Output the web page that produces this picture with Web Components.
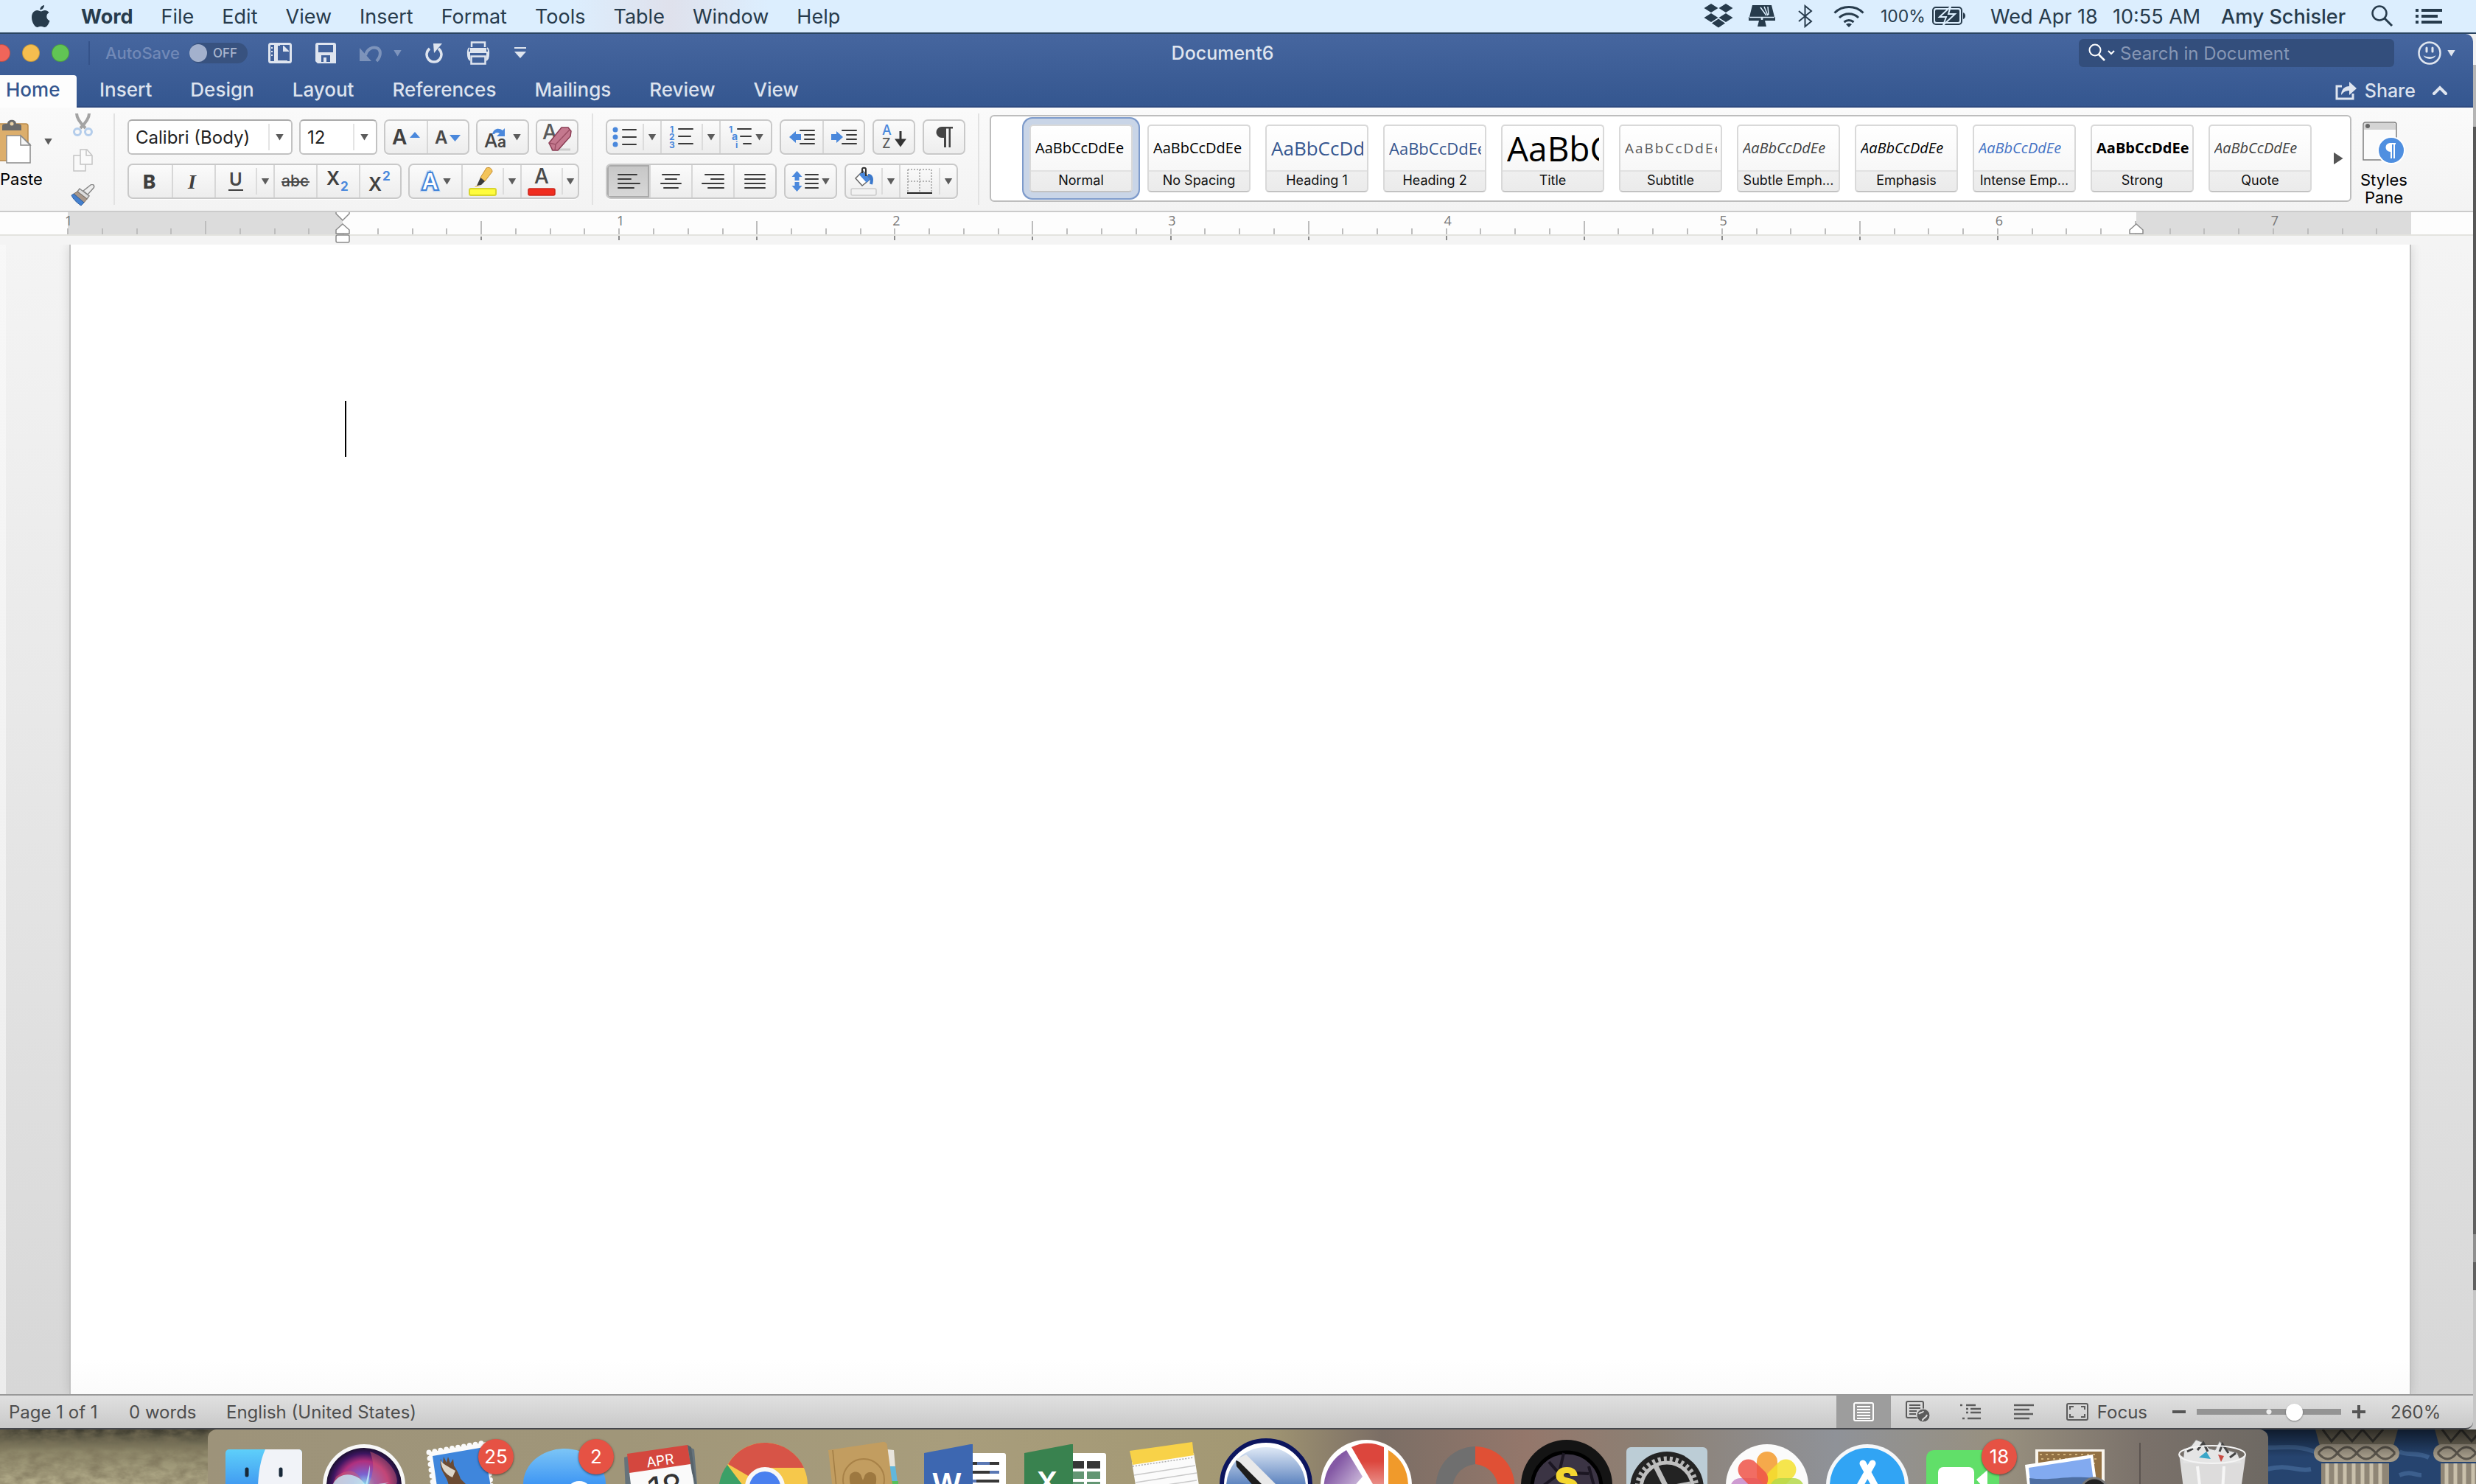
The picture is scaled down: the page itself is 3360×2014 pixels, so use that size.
<!DOCTYPE html>
<html lang="en">
<head>
<meta charset="utf-8">
<title>Document6</title>
<style>
html,body{margin:0;height:100%}
body{font-family:Inter,"Liberation Sans",sans-serif;overflow:hidden;background:#6b6a62}
</style>
</head>
<body>
<desktop-screen></desktop-screen>
<script>
const BASE = `<style>
*{box-sizing:border-box}
button{font:inherit;color:inherit;background:none;border:0;padding:0;margin:0;display:flex;align-items:center;justify-content:center;white-space:nowrap}
a{color:inherit;text-decoration:none;white-space:nowrap}
svg{display:block;flex:none}
nav{display:flex;align-items:center}
.caret{width:11px;height:9px;flex:none;background:#5c5c5c;clip-path:polygon(0 0,100% 0,50% 100%)}
</style>`;

function define(name, markup) {
  customElements.define(name, class extends HTMLElement {
    constructor() {
      super();
      this.attachShadow({ mode: 'open' }).innerHTML = BASE + (typeof markup === 'function' ? markup(this) : markup);
    }
  });
}

const svg = (w, h, body) => `<svg width="${w}" height="${h}" viewBox="0 0 ${w} ${h}" fill="none" aria-hidden="true">${body}</svg>`;
const lines = (rows, color = '#3a3a3a', sw = 2) => rows.map(([a, b, y]) => `<path d="M${a} ${y}H${b}" stroke="${color}" stroke-width="${sw}" stroke-linecap="round"/>`).join('');
const txt = (x, y, size, s, fill, extra = '') => `<text x="${x}" y="${y}" font-size="${size}" fill="${fill}" ${extra}>${s}</text>`;

const ICONS = {
  apple: svg(26, 32, `<path fill="#273b4c" d="M18 1c.3 3-2.600 6.500-5.600 6.400C12 4.500 15 1.200 18 1zM13.400 9.400c1.500 0 3-1.500 5.600-1.500 2 0 4.200 1.100 5.500 3-4.700 2.700-4 9.300 1 11.300C24 26.500 21.500 31 18.500 31c-2 0-2.700-1.200-5-1.200S10.300 31 8.500 31C5 31 1 24 1 17.600c0-6 3.700-9.500 7.300-9.500 2.300 0 3.900 1.300 5.100 1.300z"/>`),
  dropbox: svg(40, 34, `<path fill="#273b4c" d="M10 0l9.500 6L10 12 .500 6zM30 0l9.500 6L30 12l-9.500-6zM10 13l9.500 6-9.500 6-9.500-6zM30 13l9.500 6-9.500 6-9.500-6zM20 20.500l9 6-9 6-9-6z"/>`),
  cleaner: svg(36, 32, `<path fill="#273b4c" d="M5 1h26l5 20H0z"/><path fill="#273b4c" d="M0 17h36v5H22l2 8H12l2-8H0z"/><path d="M16 4l8 11M21 3l5 12M26 3l1 11M1 17.500h34" stroke="#def0ff" stroke-width="1.500"/><circle cx="18" cy="19.500" r="1.500" fill="#def0ff"/>`),
  bluetooth: svg(20, 32, `<path stroke="#273b4c" stroke-width="2" d="M1 9l17 14-8.500 7V2L18 9 1 23"/>`),
  wifi: svg(42, 30, `<g stroke="#273b4c" stroke-width="3"><path d="M1.500 10.500a28 28 0 0 1 39 0M8 17a19 19 0 0 1 26 0M14.500 23a10 10 0 0 1 13 0"/></g><path fill="#273b4c" d="M17 26a6 6 0 0 1 8 0l-4 4z"/>`),
  battery: svg(46, 26, `<rect x="1" y="1" width="39" height="23" rx="4" stroke="#273b4c" stroke-width="2"/><rect x="4" y="4" width="33" height="17" rx="2" fill="#273b4c"/><path d="M42 8c4 1 4 8 0 9z" fill="#273b4c"/><path d="M25 0L10 14h9l-4 11 16-15h-9z" fill="#273b4c" stroke="#def0ff" stroke-width="2"/>`),
  find: svg(30, 30, `<circle cx="11" cy="11" r="9.500" stroke="#273b4c" stroke-width="2.500"/><path d="M18 18l10 10" stroke="#273b4c" stroke-width="3"/>`),
  list: svg(36, 20, `<path d="M0 2h4M8 2h28M0 10h4M8 10h22M0 18h4M8 18h28" stroke="#273b4c" stroke-width="4"/>`),

  sidebar: svg(32, 28, `<rect x="1.500" y="1.500" width="29" height="25" rx="2" stroke="#dfe5ef" stroke-width="3"/><path d="M9 1v26" stroke="#dfe5ef" stroke-width="2"/><path d="M4 7h2M4 12h2M4 17h2" stroke="#dfe5ef" stroke-width="2"/><path d="M10 1h6v3h-3v20h13v2H10z" fill="#dfe5ef"/><path d="M20 4v8h8v-1l-7-7z" fill="#dfe5ef"/>`),
  save: svg(28, 28, `<path fill="#dfe5ef" fill-rule="evenodd" d="M3 0h22a3 3 0 0 1 3 3v25H3l-3-3V3a3 3 0 0 1 3-3zM4 3v10h20V3zM8 17v9h3v-6h4v6h5v-9z"/>`),
  undo: svg(32, 26, `<g opacity=".38"><path fill="#dfe5ef" d="M0 6v18h16z"/><path d="M8 16c2-8 9-12 15-10s7 10 0 18" stroke="#dfe5ef" stroke-width="4"/></g>`),
  redo: svg(24, 28, `<path d="M6 8a10 10 0 1 0 12 0" stroke="#dfe5ef" stroke-width="3.500"/><path fill="#dfe5ef" d="M11 1h12L12 14z"/>`),
  print: svg(32, 32, `<path d="M7 8V1.500h18V8" stroke="#dfe5ef" stroke-width="2.500"/><path fill="#dfe5ef" d="M5 9h22v7H5z"/><path d="M4 9c-3 2-3 13 1 17M28 9c3 2 3 13-1 17" stroke="#dfe5ef" stroke-width="2"/><path fill="#dfe5ef" d="M1 14h4v11l-3-1zM31 14h-4v11l3-1z"/><rect x="6.500" y="20.500" width="19" height="10" stroke="#dfe5ef" stroke-width="2.500"/>`),
  customise: svg(18, 16, `<path d="M1 1h16" stroke="#dfe5ef" stroke-width="2"/><path fill="#dfe5ef" d="M1 6h16l-8 9z"/>`),
  search: svg(38, 26, `<circle cx="10" cy="9" r="7.500" stroke="#fff" stroke-width="2"/><path d="M15 15l8 8" stroke="#fff" stroke-width="2.500"/><path d="M28 10l4 4 4-4" stroke="#fff" stroke-width="2"/>`),
  smile: svg(32, 32, `<circle cx="16" cy="16" r="14.500" stroke="#dfe5ef" stroke-width="2.500"/><path d="M12 9v5M20 9v5" stroke="#dfe5ef" stroke-width="3" stroke-linecap="round"/><path d="M7.500 19c3 6.500 14 6.500 17 0-4 3-13 3-17 0z" fill="#dfe5ef"/>`),
  share: svg(30, 26, `<path d="M9 7H2v17h22v-7" stroke="#dfe5ef" stroke-width="3"/><path d="M8 19c0-8 5-12 11-12V1l10 9-10 9v-6c-5 0-8 2-11 6z" fill="#dfe5ef"/>`),
  chevron: svg(22, 14, `<path d="M3 11l8-8 8 8" stroke="#dfe5ef" stroke-width="4" stroke-linecap="round"/>`),

  clipboard: svg(44, 60, `<rect x="-12" y="6" width="50" height="50" rx="3" fill="#dcae6c" stroke="#b98b4c" stroke-width="1.500"/><path d="M3 15V9c0-3 4-3 7-3 0-7 12-7 12 0 3 0 7 0 7 3v6z" fill="#6a6a6a"/><circle cx="16" cy="6" r="2.500" fill="#e8d0a5"/><path d="M9 22h19l13 12v25H9z" fill="#fff" stroke="#8b8b8b" stroke-width="1.500"/><path d="M28 22v13h13z" fill="#f6f6f6" stroke="#8b8b8b" stroke-width="1.500"/>`),
  cut: svg(28, 32, `<path d="M5 0c0 6 6 14 12 20M22 0c0 6-6 14-12 20" stroke="#a3a3a3" stroke-width="4"/><circle cx="6" cy="25" r="4.500" stroke="#b4cdeb" stroke-width="3"/><circle cx="21" cy="25" r="4.500" stroke="#b4cdeb" stroke-width="3"/>`),
  copy: svg(28, 32, `<path d="M1 9h16v21H1z" fill="#f9f9f9" stroke="#c4c4c4" stroke-width="1.500"/><path d="M10 1h9l7 8v12H10z" fill="#fafafa" stroke="#c4c4c4" stroke-width="1.500"/><path d="M18 1v8h8" stroke="#c4c4c4" stroke-width="1.500"/>`),
  brush: svg(34, 30, `<path d="M17 9L27 1c3-2 6 1 4 4l-8 9z" fill="#eee" stroke="#888" stroke-width="1.500"/><path d="M12 6l13 10-3 4L9 10z" fill="#ddd" stroke="#888" stroke-width="1.500"/><path d="M9 10l13 10-4 5L4 13z" fill="#a8978a" stroke="#7d7064"/><path d="M4 13l14 12-4 4C8 25 3 20 1 15z" fill="#4580cd" stroke="#305e9e"/>`),
  grow: svg(38, 26, txt(0, 23, 28, 'A', '#404040', 'font-weight="600"') + `<path d="M24 14l7-8 7 8z" fill="#4a88dc"/>`),
  shrink: svg(36, 26, txt(0, 22, 24, 'A', '#484848', 'font-weight="600"') + `<path d="M20 10h15l-7.500 9z" fill="#4a88dc"/>`),
  case: svg(36, 32, txt(0, 30, 26, 'A', '#444', 'font-weight="500"') + txt(18, 30, 21, 'a', '#444', 'font-weight="600"') + `<path d="M11 12c2-8 9-9 14-5l3-3v11H17l4-4c-4-2-6-1-7 1z" fill="#4a88dc"/>`),
  erase: svg(44, 42, txt(2, 24, 28, 'A', '#5a5a5a', 'font-weight="500"') + `<path d="M14 38h26" stroke="#ccc" stroke-width="3"/><path d="M11 29L28 8h9l4 5-1 7-17 19h-7z" fill="#c4788e" stroke="#8b3d54" stroke-width="1.500"/><path d="M11 29l9 2 19-20M20 31l-1 8" stroke="#9c5066" stroke-width="1.500"/>`),
  bold: svg(22, 26, txt(1, 23, 26, 'B', '#3f3f3f', 'font-weight="800"')),
  italic: svg(22, 26, txt(3, 23, 28, 'I', '#3f3f3f', 'font-weight="700" font-style="italic" font-family="Liberation Serif"')),
  under: svg(22, 28, txt(2, 20, 24, 'U', '#484848', 'font-weight="600"') + `<path d="M1 26h20" stroke="#3f3f3f" stroke-width="2"/>`),
  strike: svg(38, 26, txt(0, 20, 21, 'abc', '#484848', 'font-weight="500"') + `<path d="M0 14h38" stroke="#484848" stroke-width="2"/>`),
  sub: svg(32, 32, txt(0, 21, 25, 'X', '#404040', 'font-weight="600"') + txt(19, 29, 17, '2', '#4a88dc', 'font-weight="700"')),
  sup: svg(32, 32, txt(0, 29, 25, 'X', '#404040', 'font-weight="600"') + txt(19, 15, 17, '2', '#4a88dc', 'font-weight="700"')),
  effects: svg(28, 30, `<g opacity=".4">${txt(3, 26, 30, 'A', '#8ebbf0', 'stroke="#8ebbf0" stroke-width="7"')}</g>` + txt(3, 26, 30, 'A', '#fff', 'font-weight="500" stroke="#3f82d8" stroke-width="4" paint-order="stroke"')),
  highlight: svg(38, 40, `<path d="M16 15L24 2c4-2 8 1 8 5L22 20z" fill="#f3c45b" stroke="#c48e31"/><path d="M16 15l6 5-5 5-6 1z" fill="#3b3b3b"/><path d="M10 26h7l-9 2z" fill="#e7b64e"/><rect x="1" y="30" width="36" height="9" rx="2" fill="#fffc3d" stroke="#d8d52c" stroke-width="2"/>`),
  color: svg(38, 40, txt(9, 23, 28, 'A', '#4a4a4a', 'font-weight="500"') + `<rect x="1" y="30" width="36" height="9" rx="2" fill="#f02d20" stroke="#cb241a" stroke-width="1.500"/>`),
  bullets: svg(34, 28, [4, 14, 24].map(y => `<circle cx="4" cy="${y}" r="3.500" fill="#4a88dc"/>`).join('') + lines([[14, 32, 4], [14, 32, 14], [14, 32, 24]])),
  numbers: svg(34, 32, txt(1, 10, 12, '1', '#4a88dc', 'font-weight="700"') + txt(0, 20, 12, '2', '#4a88dc', 'font-weight="700"') + txt(0, 31, 12, '3', '#4a88dc', 'font-weight="700"') + lines([[13, 32, 5], [13, 29, 15], [13, 32, 25]])),
  multi: svg(34, 32, txt(1, 10, 12, '1', '#4a88dc', 'font-weight="700"') + txt(5, 20, 14, 'a', '#4a88dc', 'font-weight="700"') + txt(10, 31, 12, 'i', '#4a88dc', 'font-weight="700"') + lines([[13, 31, 5], [17, 31, 15], [21, 31, 25]])),
  outdent: svg(36, 24, `<path d="M1 12l9-8v4h7v8h-7v4z" fill="#4a88dc"/>` + lines([[16, 35, 3], [22, 35, 9], [22, 35, 15], [16, 35, 21]])),
  indent: svg(36, 24, `<path d="M17 12L8 4v4H1v8h7v4z" fill="#4a88dc"/>` + lines([[16, 35, 3], [22, 35, 9], [22, 35, 15], [16, 35, 21]])),
  sort: svg(34, 36, txt(1, 15, 18, 'A', '#4a88dc', 'font-weight="500"') + txt(1, 33, 18, 'Z', '#5a5a5a', 'font-weight="500"') + `<path d="M26 10v12h-5l5 7 5-7h-5" stroke="#333" fill="#333" stroke-width="3"/>`),
  pilcrow: svg(24, 30, `<path fill="#444" d="M9 1h15v2.500h-3V29h-2.500V3.500H15V29h-3V16H9A7.500 7.500 0 0 1 9 1z"/>`),
  left: svg(32, 24, lines([[2, 27, 3], [2, 19, 9], [2, 31, 15], [2, 23, 21]])),
  center: svg(32, 24, lines([[4, 27, 3], [8, 23, 9], [2, 29, 15], [6, 25, 21]])),
  right: svg(32, 24, lines([[5, 30, 3], [13, 30, 9], [1, 30, 15], [9, 30, 21]])),
  justify: svg(32, 24, lines([[2, 29, 3], [2, 29, 9], [2, 29, 15], [2, 29, 21]])),
  spacing: svg(38, 28, `<path d="M7.500 0l7 8h-4v5h-6V8h-4zM7.500 28l7-8h-4v-5h-6v5h-4z" fill="#4a88dc"/>` + lines([[19, 36, 5], [19, 36, 11], [19, 36, 17], [19, 36, 23]])),
  bucket: svg(38, 40, `<path d="M8 16L18 6l10 11-11 9z" fill="#fff" stroke="#666" stroke-width="1.500"/><path d="M13 11l10 11 5-5L18 7z" fill="#4a88dc"/><path d="M22 13V4c0-3-5-3-5 0v5" stroke="#333" stroke-width="2"/><path d="M25 12c5 0 6 5 4 12" stroke="#3a78cc" stroke-width="4"/><rect x="2" y="30" width="34" height="9" rx="2" fill="#f2f2f2" stroke="#ccc" stroke-width="1.500"/>`),
  borders: svg(36, 36, `<path d="M2 2h32M2 18h32M2 2v30M18 2v30M34 2v30" stroke="#b4b4b4" stroke-width="2" stroke-dasharray="2 2"/><path d="M1 34h34" stroke="#222" stroke-width="2"/>`),
  pane: svg(58, 60, `<path d="M1 52V4a3 3 0 0 1 3-3h39a3 3 0 0 1 3 3v48z" fill="#fbfbfb" stroke="#7f7f7f" stroke-width="1.500"/><path d="M2 11V4l2-2h39l2 2v7z" fill="#d4d4d4"/><circle cx="7" cy="6" r="3" fill="#666"/><circle cx="39" cy="39" r="18" fill="#4f8fe0" stroke="#fff" stroke-width="2"/><path fill="#fff" d="M37 29h8v2h-1v19h-2V31h-2v19h-2V41a6 6 0 0 1-1-12z"/>`),

  print_layout: svg(28, 26, `<rect x="1" y="1" width="26" height="24" rx="2" stroke="#fff" stroke-width="2"/><path d="M5 6h18M5 10h18M5 14h18M5 18h18M5 22h18" stroke="#fff" stroke-width="2"/>`),
  web_layout: svg(34, 30, `<rect x="1" y="1" width="23" height="22" rx="2" stroke="#5c5c5c" stroke-width="2"/><path d="M5 6h15M5 10h15M5 14h10M5 18h9" stroke="#5c5c5c" stroke-width="2"/><circle cx="24" cy="20" r="9" fill="#5c5c5c" stroke="#d6d6d6"/><path d="M18 18c3-4 5 0 6-4M23 27c0-4 5-3 6-8" stroke="#ddd" stroke-width="2"/>`),
  outline: svg(30, 24, `<path d="M0 3h3M8 3h13M8 8h3M14 8h14M8 13h3M14 13h14M3 21h3M10 21h18" stroke="#5c5c5c" stroke-width="2.500"/>`),
  draft: svg(28, 22, `<path d="M0 2h27M0 8h21M0 14h26M0 20h21" stroke="#5c5c5c" stroke-width="2.500"/>`),
  focus: svg(30, 24, `<rect x="1" y="1" width="28" height="22" rx="2" stroke="#5c5c5c" stroke-width="2"/><path d="M5 9V5h5M20 5h5v4M25 15v4h-5M10 19H5v-4" stroke="#5c5c5c" stroke-width="2"/>`),
};

const petals = () => [['#f39a2c', 0], ['#f3e02e', 45], ['#b5d84a', 90], ['#63b95c', 135], ['#5bbbd0', 180], ['#8079c8', 225], ['#c58ac9', 270], ['#ee5348', 315]]
  .map(([c, r]) => `<rect x="54" y="30" width="28" height="46" rx="14" fill="${c}" opacity=".85" transform="rotate(${r} 68 80)"/>`).join('');

const APPS = {
  Finder: `<defs><linearGradient id="a" x2="0" y2="1"><stop stop-color="#5ecffa"/><stop offset="1" stop-color="#3a8fef"/></linearGradient></defs><rect x="16" y="27" width="104" height="60" rx="5" fill="url(#a)"/><path d="M70 27h45a5 5 0 0 1 5 5v50H60c0-20 3-40 10-55z" fill="#f1f3f8"/><path d="M45 54v8M91 54v8" stroke="#182838" stroke-width="5" stroke-linecap="round"/>`,
  Siri: `<defs><radialGradient id="a" cx=".5" cy=".5" r=".5"><stop stop-color="#8fe8f0"/><stop offset=".3" stop-color="#7a62d0"/><stop offset=".65" stop-color="#b0307e"/><stop offset=".85" stop-color="#3c1660"/><stop offset="1" stop-color="#1b1030"/></radialGradient></defs><circle cx="68" cy="76" r="56" fill="#f8f8f8"/><circle cx="68" cy="76" r="51" fill="url(#a)"/><path d="M30 64c22-16 32-4 38 12-20-2-32 0-46 6zM76 30c30 10 40 36 36 44-18 0-28 4-38 2 8-20 8-30 2-46z" fill="#d9626f" opacity=".45"/><path d="M26 74c10-20 36-14 44 2L76 48c0 16-2 22-4 28l30-4-34 12z" fill="#c6f5ff" opacity=".75"/>`,
  Mail: `<path d="M20 31L96 18l10 68H27z" fill="#fafafa" stroke="#fafafa" stroke-width="7" stroke-dasharray="0 8" stroke-linecap="round"/><path d="M20 31L96 18l10 68H27z" fill="#fafafa"/><path d="M25 36l70-12 10 60H32z" fill="#3f86dc"/><path d="M36 40l3 6 1-9 4 8 2-8 3 9 4-6 1 9c4 6 7 12 9 18l8 8 4 14H50c-4-10-2-14-6-22-4-8-10-14-8-27z" fill="#6b4b32"/><path d="M36 42c4 6 10 8 20 14l-4 9c-10-4-15-12-16-23z" fill="#ddd6c8"/>`,
  Messages: `<defs><linearGradient id="a" x2="0" y2="1"><stop stop-color="#7cc5f6"/><stop offset=".5" stop-color="#3f97f4"/></linearGradient></defs><ellipse cx="68" cy="74" rx="56" ry="48" fill="url(#a)"/><circle cx="88" cy="88" r="18" fill="#fff"/>`,
  Calendar: `<path d="M13 38l6-2 8 50H15zM104 25l4 2 5 60h-8z" fill="#66737b"/><path d="M20 58l84-12 6 45H24z" fill="#fafafa"/><path d="M17 33l82-12 4 26-83 12z" fill="#d4473e"/><path d="M99 21l5 3 7 55-6-20z" fill="#56626a"/><g transform="rotate(-8 62 44)">${txt(62, 49, 19, 'APR', '#fff', 'text-anchor="middle"')}${txt(64, 96, 46, '18', '#333', 'text-anchor="middle"')}</g>`,
  Chrome: `<circle cx="68" cy="76" r="58" fill="#f6c84b"/><path d="M68 76L18 47A58 58 0 0 1 121 52H68z" fill="#d75447"/><path d="M17 48l30 40-2 50A58 58 0 0 1 17 48z" fill="#3ba067"/><circle cx="68" cy="78" r="27" fill="#f8f8f8"/><circle cx="68" cy="78" r="21" fill="#4a80ef"/>`,
  Contacts: `<path d="M98 27l9 1 2 24-9-1z" fill="#e8e4dc"/><path d="M101 50h8l3 22-9-1z" fill="#61b7dc"/><path d="M104 70h9v6h-8z" fill="#58c05a"/><path d="M18 28L92 17c4 0 6 2 6 5l8 60H24z" fill="#c29d60"/><path d="M24 28l5 50" stroke="#a17d44" stroke-width="1.500"/><circle cx="66" cy="68" r="28" fill="none" stroke="#a88248" stroke-width="2"/><path d="M48 84c2-6-2-12-1-20s14-9 16 0l2 5 2-5c2-8 15-8 16 1 1 8-3 13 1 19z" fill="#9d7840"/>`,
  Word: `<path d="M76 32h44a3 3 0 0 1 3 3v50H76z" fill="#fff"/><path d="M77 46h37M77 58h37M77 70h37" stroke="#373737" stroke-width="4"/><path d="M84 46h17M101 58h13M77 70h6" stroke="#5a78b4" stroke-width="4"/><path d="M12 32l63-12h3v66H12z" fill="#3d67b1"/>${txt(43, 88, 40, 'W', '#fff', 'text-anchor="middle" font-weight="600"')}`,
  Excel: `<path d="M76 32h44a3 3 0 0 1 3 3v50H76z" fill="#fff"/><path d="M78 48h15M97 48h18" stroke="#373737" stroke-width="10"/><path d="M78 62h15M97 62h18M78 76h15M97 76h18" stroke="#639673" stroke-width="10"/><path d="M12 32l63-12h3v66H12z" fill="#39824f"/>${txt(43, 86, 40, 'X', '#fff', 'text-anchor="middle" font-weight="600"')}`,
  Notes: `<path d="M22 44l84-12 8 50H28z" fill="#fbfbfb"/><path d="M19 29l85-12 2 18-83 13z" fill="#f8d248"/><path d="M23 50l83-12" stroke="#aaa" stroke-width="1.500" stroke-dasharray="2 2"/><path d="M25 62l83-13M27 72l83-13M50 78l60-9" stroke="#c9c9c9" stroke-width="1.500"/>`,
  Scanner: `<defs><linearGradient id="a" x2="0" y2="1"><stop stop-color="#dfe9f6"/><stop offset=".6" stop-color="#3a68b0"/></linearGradient></defs><circle cx="68" cy="75" r="60" fill="#fff" stroke="#0c155e" stroke-width="6"/><circle cx="68" cy="78" r="54" fill="url(#a)"/><path d="M28 40l13-6 44 44H58z" fill="#e9e9e9"/><path d="M27 42l5 2 34 34H52L28 50z" fill="#1d1d1d"/>`,
  Picasa: `<defs><linearGradient id="p" x1="0" y1="0" x2="1" y2="1"><stop offset=".3" stop-color="#8459a5"/><stop offset="1" stop-color="#e6dcee"/></linearGradient><linearGradient id="r" x2="0" y2="1"><stop offset=".3" stop-color="#dc463d"/><stop offset="1" stop-color="#f4c8c4"/></linearGradient></defs><circle cx="68" cy="76" r="62" fill="#fff"/><path d="M41 28l22 36-28 32H12c-6-28 4-54 29-68z" fill="url(#p)"/><path d="M48 24c14-7 30-7 44 0v76z" fill="url(#r)"/><path d="M98 28c22 14 30 34 26 64H98z" fill="#f09a2b"/>`,
  Ring: `<path d="M80 23a54 54 0 0 0-52 66h22A34 34 0 0 1 80 47z" fill="#6f6f6f"/><path d="M80 23a54 54 0 0 1 52 66h-22A34 34 0 0 0 80 47z" fill="#e05035"/>`,
  Studio: `<circle cx="68" cy="76" r="62" fill="#141414"/><circle cx="68" cy="78" r="47" fill="#3b3444" stroke="#000" stroke-width="5"/><path d="M44 44l14 16-24 18M64 32l-6 26 40 2M98 50l8 30" stroke="#1b1622" stroke-width="4"/>${txt(68, 88, 50, 'S', '#f4d630', 'text-anchor="middle" font-weight="900"')}`,
  Settings: `<rect x="13" y="24" width="110" height="70" rx="6" fill="#bccdd6"/><circle cx="68" cy="80" r="50" fill="#232323"/><circle cx="68" cy="80" r="40" stroke="#b5b5b5" stroke-width="7" stroke-dasharray="4 4"/><circle cx="68" cy="80" r="35" stroke="#c0c0c0" stroke-width="5"/><path d="M68 80L52 48M68 80l32-6" stroke="#bdbdbd" stroke-width="7"/>`,
  Photos: `<circle cx="68" cy="76" r="56" fill="#fbfbfb"/>${petals()}`,
  'App Store': `<circle cx="68" cy="76" r="56" fill="#f6f8fa"/><circle cx="68" cy="76" r="51" fill="#31a4f4"/><path d="M62 46l26 48M75 46L48 94" stroke="#fff" stroke-width="9" stroke-linecap="round"/>`,
  FaceTime: `<rect x="12" y="28" width="99" height="60" rx="10" fill="#61df69"/><rect x="28" y="51" width="49" height="40" rx="7" fill="#fff"/><path d="M80 68l15-13v30z" fill="#fff"/>`,
  Preview: `<path d="M24 27h94v55H24z" fill="#f8f4ec"/><path d="M28 30h86v50H28z" fill="#927043"/><path d="M30 34h80M32 40h80M30 46h80" stroke="#d0b078" stroke-width="2" stroke-dasharray="3 5"/><path d="M10 48l92-14 7 50H14z" fill="#fff"/><path d="M15 52l84-13 5 40H18z" fill="#82aaf0"/><path d="M16 66c30 4 50-4 86 0v12H17z" fill="#4e6fa3"/><circle cx="104" cy="84" r="18" fill="#222" stroke="#777" stroke-width="3"/>`,
  Trash: `<path d="M30 28l10-6 6-8 10 4 8 8 8 2 6-12 10 12 14 4 6 14H28z" fill="#e5e5e5" stroke="#888"/><path d="M48 28l8-10 6 12M78 30l4-10 8 12M34 30l8-4M92 38l8-6" stroke="#444" stroke-width="3"/><path d="M50 38l10-8 6 10z" fill="#3aa6c8"/><path d="M76 34l8 2-4 8z" fill="#c84b43"/><path d="M23 32c10 18 82 18 91 0l-8 56H30z" fill="#e3e3e3" opacity=".95"/><ellipse cx="68" cy="34" rx="45" ry="12" stroke="#f4f4f4" stroke-width="2"/><path d="M48 50l4 34M84 50l-2 34" stroke="#f6f6f6" stroke-width="4"/>`,
};

define('mac-menubar', () => `<style>
:host{display:flex;align-items:center;height:46px;flex:none;padding:0 46px 2px 42px;color:#273b4c;font-size:27px;
 background:linear-gradient(#0000 44px,#2a4561 44px),linear-gradient(90deg,#dceefe 23%,#dfe1ec 27%,#dceefe 31%)}
nav{gap:38px}nav b{font-weight:700}.mark{margin-right:4px}
.status{display:flex;align-items:center;margin-left:auto;white-space:nowrap}
.status>*{flex:none}
.pct{width:60px;font-size:23px;margin:0 10px 0 22px}.day{width:150px;margin-left:33px}.clock{width:124px;margin-left:16px}.user{width:172px;font-weight:500;margin:0 32px 0 23px}
</style>
<nav><button class="mark" aria-label="Apple">${ICONS.apple}</button><a href="#"><b>Word</b></a>${['File', 'Edit', 'View', 'Insert', 'Format', 'Tools', 'Table', 'Window', 'Help'].map(t => `<a href="#">${t}</a>`).join('')}</nav>
<div class="status">${ICONS.dropbox}<span style="width:21px"></span>${ICONS.cleaner}<span style="width:31px"></span>${ICONS.bluetooth}<span style="width:28px"></span>${ICONS.wifi}
<span class="pct">100%</span>${ICONS.battery}<span class="day">Wed Apr 18</span><span class="clock">10:55 AM</span><span class="user">Amy Schisler</span>${ICONS.find}<span style="width:30px"></span>${ICONS.list}</div>`);

define('title-bar', () => `<style>
:host{display:grid;grid-template-columns:1fr auto 1fr;align-items:center;height:52px;margin-left:-38px;color:#dfe5ef;font-size:24px}
.left{display:flex;align-items:center;gap:32px;padding-left:28px}
.lights{display:flex;gap:16px}.lights button{width:24px;height:24px;border-radius:50%;border:1px solid #0003}
.auto{display:flex;align-items:center;height:32px;border-left:2px solid #35538a;padding-left:21px;margin:0 -4px 0 -6px;color:#7189b7;font-weight:500;font-size:22px}
.auto span{width:114px}
.switch{display:flex;align-items:center;width:79px;height:28px;border-radius:14px;background:#38527f;color:#a9b6cf;font-size:17px;gap:8px}
.switch input{appearance:none;margin:0;width:24px;height:24px;border-radius:50%;background:#a3b1cd}
.undo{gap:14px}.undo i{background:#7e94bd}
h1{font-size:25px;font-weight:500;margin:0}
.right{display:flex;align-items:center;justify-content:flex-end;padding-right:24px}
.search{display:flex;align-items:center;width:428px;height:38px;border-radius:6px;background:#334e7c;padding-left:12px;gap:6px}
input[type=search]{appearance:none;flex:1;min-width:0;border:0;background:none;font:24px Inter,sans-serif;color:#fff;padding:0;outline:0}
input::placeholder{color:#8797b5;opacity:1}
.smile{margin-left:32px;gap:8px}.smile i{background:#dfe5ef}
</style>
<div class="left"><div class="lights"><button aria-label="Close" style="background:#f0655a"></button><button aria-label="Minimise" style="background:#f5be4f"></button><button aria-label="Zoom" style="background:#61c554"></button></div>
<div class="auto"><span>AutoSave</span><label class="switch"><input type="checkbox" aria-label="AutoSave">OFF</label></div>
<button aria-label="Sidebar">${ICONS.sidebar}</button><button aria-label="Save">${ICONS.save}</button><button class="undo" aria-label="Undo">${ICONS.undo}<i class="caret"></i></button>
<button aria-label="Repeat">${ICONS.redo}</button><button aria-label="Print">${ICONS.print}</button><button aria-label="Customise toolbar">${ICONS.customise}</button></div>
<h1>Document6</h1>
<div class="right"><label class="search">${ICONS.search}<input type="search" placeholder="Search in Document"></label><button class="smile" aria-label="Feedback">${ICONS.smile}<i class="caret"></i></button></div>`);

define('ribbon-tabs', () => `<style>
:host{display:flex;height:48px;padding:4px 34px 0 0;color:#dde3ee;font-size:26px;font-weight:500;box-shadow:inset 0 -2px #2e4a80}
nav{gap:52px;flex:1}
nav a{line-height:40px;padding-bottom:4px}
nav a:first-child{align-self:stretch;width:104px;padding-left:8px;margin-right:-21px;background:#fdfdfd;color:#34568f;border-radius:0 4px 0 0}
.share{gap:10px;margin-right:22px;font-size:25px}
button{padding-bottom:2px}
</style>
<nav>${['Home', 'Insert', 'Design', 'Layout', 'References', 'Mailings', 'Review', 'View'].map(t => `<a href="#">${t}</a>`).join('')}</nav>
<button class="share">${ICONS.share}Share</button><button aria-label="Collapse ribbon">${ICONS.chevron}</button>`);

define('tool-group', `<style>
:host{display:flex;height:48px;border:2px solid #c9c9c9;border-radius:7px;background:linear-gradient(#fbfbfb,#ededed);box-shadow:0 1px #fff;overflow:hidden;flex:none}
</style><slot></slot>`);

define('tool-button', el => {
  const icon = el.getAttribute('icon'), w = el.getAttribute('w'), menu = el.hasAttribute('menu');
  return `<style>
:host{display:flex;width:${w}px}
:host(:not(:first-child)){border-left:2px solid #d7d7d7}
:host([drop]){border-left:0!important}
:host([on]){background:linear-gradient(#c6c6c6,#d8d8d8);box-shadow:inset 0 0 0 2px #aaa}
button{flex:1;gap:3px}
:host([drop]) button{border-left:2px solid #dcdcdc;margin:4px 0}
</style><button aria-label="${icon || 'Options'}">${icon ? ICONS[icon] : ''}${menu || !icon ? '<i class="caret"></i>' : ''}</button>`;
});

define('combo-box', el => `<style>
:host{display:flex;height:48px;flex:none}
label{display:flex;flex:1;align-items:center;background:#fff;border:2px solid #c2c2c2;border-top-color:#aaa;border-radius:6px;padding-right:10px}
select{appearance:none;flex:1;min-width:0;border:0;background:none;font:24px Inter,sans-serif;color:#222;padding:0 0 0 9px;outline:0}
i{box-sizing:border-box}
.rule{width:2px;height:36px;background:#e4e4e4;margin-right:8px}
</style><label><select aria-label="${el.getAttribute('name')}"><option>${el.getAttribute('value')}</option></select><i class="rule"></i><i class="caret"></i></label>`);

define('style-card', `<style>
:host{display:block;width:140px;height:92px;flex:none}
button{width:100%;height:100%;flex-direction:column;justify-content:flex-start;align-items:stretch;border:2px solid #d9d9d9;border-bottom-color:#c2c2c2;border-radius:5px;background:linear-gradient(#fff,#f7f7f7 60px,#e2e2e2 60px,#e2e2e2 62px,#efefef 62px,#ebebeb)}
.sample{font-family:"Open Sans",sans-serif;font-size:20px;line-height:60px;height:60px;margin:0 5px 0 6px;overflow:hidden;text-align:left}
.name{font-size:18px;line-height:28px;color:#111}
:host([selected]) button{box-shadow:0 0 0 8px #c9d5e7,0 0 0 10px #7e9bcb}
</style><button><span class="sample"><slot></slot></span><span class="name"><slot name="name"></slot></span></button>`);

const STYLES = [
  ['Normal', 'color:#000'], ['No Spacing', 'color:#000'], ['Heading 1', 'color:#35568f;font-size:26px'], ['Heading 2', 'color:#35568f;font-size:22px'],
  ['Title', 'color:#000;font-size:46px'], ['Subtitle', 'color:#5a5a5a;font-size:19px;letter-spacing:2px'], ['Subtle Emph...', 'color:#404040;font-style:italic'], ['Emphasis', 'color:#000;font-style:italic'],
  ['Intense Emp...', 'color:#4472c4;font-style:italic'], ['Strong', 'color:#000;font-weight:700'], ['Quote', 'color:#404040;font-style:italic']];

define('ribbon-panel', () => `<style>
:host{display:flex;height:142px;padding:8px 0 8px;background:linear-gradient(#fafafa,#f3f3f3);border-bottom:2px solid #cbcbcb;flex:none;color:#000}
section{display:flex;flex-direction:column;gap:12px;padding:8px 17px 0;border-right:2px solid #e2e2e2;flex:none}
.row{display:flex;gap:9px}.para .row{gap:10px}
.clip{flex-direction:row;padding:0;width:156px;gap:20px}
.paste{flex-direction:column;align-items:flex-start;justify-content:flex-start;padding-top:8px;font-size:22px;width:76px}
.paste div{display:flex;align-items:center;gap:16px;margin-bottom:8px}
.edit{display:flex;flex-direction:column;gap:16px}
.gallery{display:flex;flex:1;min-width:0;height:118px;align-self:center;margin:-2px 0 0 14px;padding-left:52px;gap:20px;align-items:center;background:#fff;border:2px solid #bdbdbd;border-radius:6px}
.next{width:36px;height:80px;margin-left:auto}
.next i{width:13px;height:17px;background:#555;clip-path:polygon(0 0,100% 50%,0 100%)}
.pane{flex-direction:column;justify-content:flex-start;width:88px;margin-right:77px;padding-top:11px;font-size:22px;line-height:24px;gap:7px}
</style>
<section class="clip"><button class="paste"><div>${ICONS.clipboard}<i class="caret"></i></div>Paste</button>
<div class="edit"><button aria-label="Cut">${ICONS.cut}</button><button aria-label="Copy">${ICONS.copy}</button><button aria-label="Format painter">${ICONS.brush}</button></div></section>
<section><div class="row"><combo-box name="Font" value="Calibri (Body)" style="width:224px"></combo-box><combo-box name="Font size" value="12" style="width:106px"></combo-box>
<tool-group><tool-button icon="grow" w="56"></tool-button><tool-button icon="shrink" w="56"></tool-button></tool-group>
<tool-group><tool-button icon="case" w="68" menu></tool-button></tool-group><tool-group><tool-button icon="erase" w="54"></tool-button></tool-group></div>
<div class="row"><tool-group><tool-button icon="bold" w="58"></tool-button><tool-button icon="italic" w="58"></tool-button><tool-button icon="under" w="56"></tool-button><tool-button drop w="24"></tool-button><tool-button icon="strike" w="58"></tool-button><tool-button icon="sub" w="58"></tool-button><tool-button icon="sup" w="56"></tool-button></tool-group>
<tool-group><tool-button icon="effects" w="70" menu></tool-button><tool-button icon="highlight" w="56"></tool-button><tool-button drop w="24"></tool-button><tool-button icon="color" w="56"></tool-button><tool-button drop w="22"></tool-button></tool-group></div></section>
<section class="para"><div class="row"><tool-group><tool-button icon="bullets" w="48"></tool-button><tool-button drop w="24"></tool-button><tool-button icon="numbers" w="56"></tool-button><tool-button drop w="24"></tool-button><tool-button icon="multi" w="70" menu></tool-button></tool-group>
<tool-group><tool-button icon="outdent" w="56"></tool-button><tool-button icon="indent" w="56"></tool-button></tool-group><tool-group><tool-button icon="sort" w="54"></tool-button></tool-group><tool-group><tool-button icon="pilcrow" w="54"></tool-button></tool-group></div>
<div class="row"><tool-group><tool-button icon="left" w="57" on></tool-button><tool-button icon="center" w="57"></tool-button><tool-button icon="right" w="57"></tool-button><tool-button icon="justify" w="57"></tool-button></tool-group>
<tool-group><tool-button icon="spacing" w="68" menu></tool-button></tool-group><tool-group><tool-button icon="bucket" w="48"></tool-button><tool-button drop w="24"></tool-button><tool-button icon="borders" w="54"></tool-button><tool-button drop w="24"></tool-button></tool-group></div></section>
<div class="gallery">${STYLES.map(([n, s], i) => `<style-card ${i ? '' : 'selected'}><span style="${s}">AaBbCcDdEe</span><span slot="name">${n}</span></style-card>`).join('')}<button class="next" aria-label="More styles"><i></i></button></div>
<button class="pane">${ICONS.pane}<span>Styles<br>Pane</span></button>`);

define('ruler-bar', () => `<style>
:host{display:block;height:44px;flex:none;background:linear-gradient(#fdfdfd 30px,#e3e3df 30px,#e3e3df 32px,#f4f4f4 32px);padding:0 84px 0 92px}
.scale{height:44px;position:relative;background:linear-gradient(#dcdcdc,#dcdcdc) 0 0/373px 30px no-repeat,linear-gradient(#dcdcdc,#dcdcdc) 100% 0/373px 30px no-repeat}
.nums{display:flex;height:12px;font:18px/22px "Open Sans",sans-serif;color:#777;margin:0 -2px 0 2px}
.nums span{flex:2;text-align:center;height:12px}.nums span:first-child{flex:1;text-align:left;margin-left:-6px;margin-right:6px}
.ticks{display:flex;height:26px;align-items:stretch}
.ticks i{flex:1 1 0;border-left:2px solid #bdbdbd;height:8px;margin-top:10px;margin-left:-1px;margin-right:1px}
.ticks i.half{height:18px;margin-top:0}
.ticks i.low{height:26px;border-image:linear-gradient(#bdbdbd 18px,#0000 18px,#0000 20px,#8c8c8c 20px) 1}
.ticks i.low.inch{height:16px;border-image:linear-gradient(#bdbdbd 8px,#0000 8px,#0000 10px,#8c8c8c 10px) 1}
.mark{position:absolute;top:0;left:363px}.mark.end{left:auto;right:363px}
</style><div class="scale"><div class="nums">${[1, '', 1, 2, 3, 4, 5, 6, 7].map(n => `<span>${n}</span>`).join('')}</div>
<div class="ticks">${Array.from({ length: 68 }, (_, i) => `<i class="${i % 8 === 4 ? 'half' : ''} ${i > 8 && i < 60 && i % 4 === 0 ? 'low' : ''} ${i % 8 ? '' : 'inch'}"></i>`).join('')}</div>
<div class="mark">${svg(20, 44, '<path d="M1 0v2l9 9 9-9V0" fill="#fff" stroke="#8b8b8b" stroke-width="1.500"/><path d="M10 16l9 8v5H1v-5z" fill="#fff" stroke="#8b8b8b" stroke-width="1.500"/><rect x="1" y="31" width="18" height="10" rx="2" fill="#fff" stroke="#8b8b8b" stroke-width="1.500"/>')}</div>
<div class="mark end">${svg(20, 44, '<path d="M10 16l9 8v5H1v-5z" fill="#fff" stroke="#8b8b8b" stroke-width="1.500"/>')}</div></div>`);

define('document-page', `<style>
:host{display:flex;flex:1;min-height:0;padding:0 84px 0 94px;background:linear-gradient(90deg,#fafafa99 8px,#0000 8px),linear-gradient(#f4f4f4,#d7d7d7)}
article{flex:1;background:linear-gradient(#fff 97%,#fbfbfb);border:solid #c2c2c2;border-width:0 2px;box-shadow:0 0 14px #0002;padding:212px 372px;outline:0;clip-path:inset(0 -20px)}
p{margin:0;height:76px;border-left:2px solid #000}
</style><article contenteditable="true" role="textbox" aria-label="Document body"><p></p></article>`);

define('status-bar', () => `<style>
:host{display:flex;align-items:center;height:48px;flex:none;border-top:2px solid #999;border-bottom:2px solid #45474c;background:linear-gradient(#e0e0e0,#c9c9c9);color:#4e4e4e;font-size:24px;padding-left:12px;border-radius:0 0 10px 0;white-space:nowrap}
.grow{flex:1}.page{width:163px}.words{width:132px}
.view{height:100%;width:74px}.view.on{background:#9d9d9d}
.focus{gap:12px;margin-left:20px}
.zoom{display:flex;align-items:center;gap:15px;margin-left:34px}
.zoom button{width:18px;height:4px;background:#555}
.zoom .plus{height:18px;background:linear-gradient(#555,#555) 50%/18px 4px no-repeat,linear-gradient(#555,#555) 50%/4px 18px no-repeat}
input{appearance:none;width:196px;height:24px;margin:0;background:radial-gradient(circle at 98px 12px,#eee 3px,#0000 4px),linear-gradient(#949494,#949494) 0 50%/100% 8px no-repeat}
input::-webkit-slider-thumb{appearance:none;width:23px;height:23px;border-radius:50%;background:#fff;box-shadow:0 1px 2px #0006}
.pct{width:78px;margin:0 34px}
</style>
<span class="page">Page 1 of 1</span><span class="words">0 words</span><span>English (United States)</span><span class="grow"></span>
<button class="view on" aria-label="Print layout">${ICONS.print_layout}</button><button class="view" aria-label="Web layout">${ICONS.web_layout}</button><button class="view" style="width:70px" aria-label="Outline">${ICONS.outline}</button><button class="view" aria-label="Draft">${ICONS.draft}</button>
<button class="focus">${ICONS.focus}Focus</button>
<div class="zoom"><button aria-label="Zoom out"></button><input type="range" min="0" max="100" value="70" aria-label="Zoom"><button class="plus" aria-label="Zoom in"></button></div><span class="pct">260%</span>`);

define('dock-app', el => {
  const name = el.getAttribute('name'), badge = el.getAttribute('badge');
  return `<style>
:host{display:block;width:136px;height:74px;position:relative;flex:none}
button{width:136px;height:74px}
svg{overflow:hidden}
.badge{position:absolute;left:87px;top:13px;width:48px;height:48px;border-radius:50%;background:#e65244;color:#fff;font-size:26px;line-height:48px;text-align:center;box-shadow:0 1px 3px #0008}
</style><button aria-label="${name}">${svg(136, 74, APPS[name])}</button>${badge ? `<span class="badge">${badge}</span>` : ''}`;
});

const column = x => `<g transform="translate(${x} 0)"><path d="M10 46h92v30H10z" fill="#8f8676"/><path d="M18 46v30M30 46v30M42 46v30M54 46v30M66 46v30M78 46v30M90 46v30" stroke="#c9c0ab" stroke-width="5"/><path d="M2 0h112l-6 22H8z" fill="#77705f"/><path d="M12 0l12 16L38 0l14 16L66 0l14 16L94 0" stroke="#3f3d38" stroke-width="3"/><rect x="0" y="20" width="116" height="24" rx="12" fill="#a39a88"/><path d="M6 32q13-16 26 0t26 0 26 0 26 0M6 32q13 16 26 0t26 0 26 0 26 0" stroke="#5a554c" stroke-width="3"/></g>`;

define('app-dock', () => `<style>
:host{display:flex;height:74px;flex:none;background:#243a58}
.sand{width:294px;margin-right:-12px}
.sea{flex:1;width:0;margin-left:-12px}
nav{flex:none;position:relative;padding:0 8px;border-radius:12px 12px 0 0;
 background:linear-gradient(90deg,#9d937a,#a09679 20%,#a89d7c 36%,#a39873 51%,#7b6e65 57%,#94776b 64%,#8c8074 70%,#8f9298 79%,#98907f 87%,#7a716a 94%,#6e6963)}
.rule{width:60px;height:56px;align-self:flex-end;background:linear-gradient(#5c5450,#5c5450) 29px 0/2px 100% no-repeat}
</style>
<svg class="sand" height="74" aria-hidden="true"><defs><filter id="g" x="0" y="0" width="100%" height="100%"><feTurbulence type="fractalNoise" baseFrequency=".05 .09" numOctaves="4" seed="4"/><feColorMatrix values="0 0 0 0 .2  0 0 0 0 .17  0 0 0 0 .1  .9 .9 0 0 -.6"/></filter><linearGradient id="s" x2="0" y2="1"><stop stop-color="#3c3a2e"/><stop offset=".4" stop-color="#8d8769"/><stop offset="1" stop-color="#b5ae8c"/></linearGradient></defs><rect width="294" height="74" fill="url(#s)"/><rect width="294" height="74" filter="url(#g)"/></svg>
<nav>${Object.keys(APPS).map(n => `${n === 'Trash' ? '<span class="rule"></span>' : ''}<dock-app name="${n}" ${{ Mail: 'badge="25"', Messages: 'badge="2"', FaceTime: 'badge="18"' }[n] || ''}></dock-app>`).join('')}</nav>
<svg class="sea" height="74" fill="none" aria-hidden="true"><defs><linearGradient id="d" x2="0" y2="1"><stop stop-color="#000" stop-opacity=".6"/><stop offset=".5" stop-color="#000" stop-opacity="0"/></linearGradient></defs><rect width="100%" height="74" fill="#26446f"/><path d="M0 22c20 8 40-6 80 10M10 54c30-8 40 4 60 0M190 30c10 6 24 0 40 8M190 62c16-6 20 0 30 0" stroke="#3c5f8d" stroke-width="6"/>${column(74)}${column(236)}<rect width="100%" height="74" fill="url(#d)"/></svg>`);

define('word-window', `<style>
:host{display:flex;flex-direction:column;flex:1;min-width:0}
header{background:linear-gradient(#46669f,#34568f);border-radius:0 10px 0 0;flex:none}
</style><header><title-bar></title-bar><ribbon-tabs></ribbon-tabs></header><ribbon-panel></ribbon-panel><ruler-bar></ruler-bar><document-page></document-page><status-bar></status-bar>`);

define('desktop-screen', `<style>
:host{display:flex;flex-direction:column;height:100vh;overflow:hidden}
main{display:flex;flex:1;min-height:0;padding-right:4px;background:linear-gradient(#f1f1f1 42px,#b5b5b5 42px,#b5b5b5 126px,#575757 126px,#606060 86%,#8f8f8f 86%,#8f8f8f 88%,#606060 88%,#606060 90%,#c6c6c6 90%)}
</style><mac-menubar></mac-menubar><main><word-window></word-window></main><app-dock></app-dock>`);
</script>
</body>
</html>
